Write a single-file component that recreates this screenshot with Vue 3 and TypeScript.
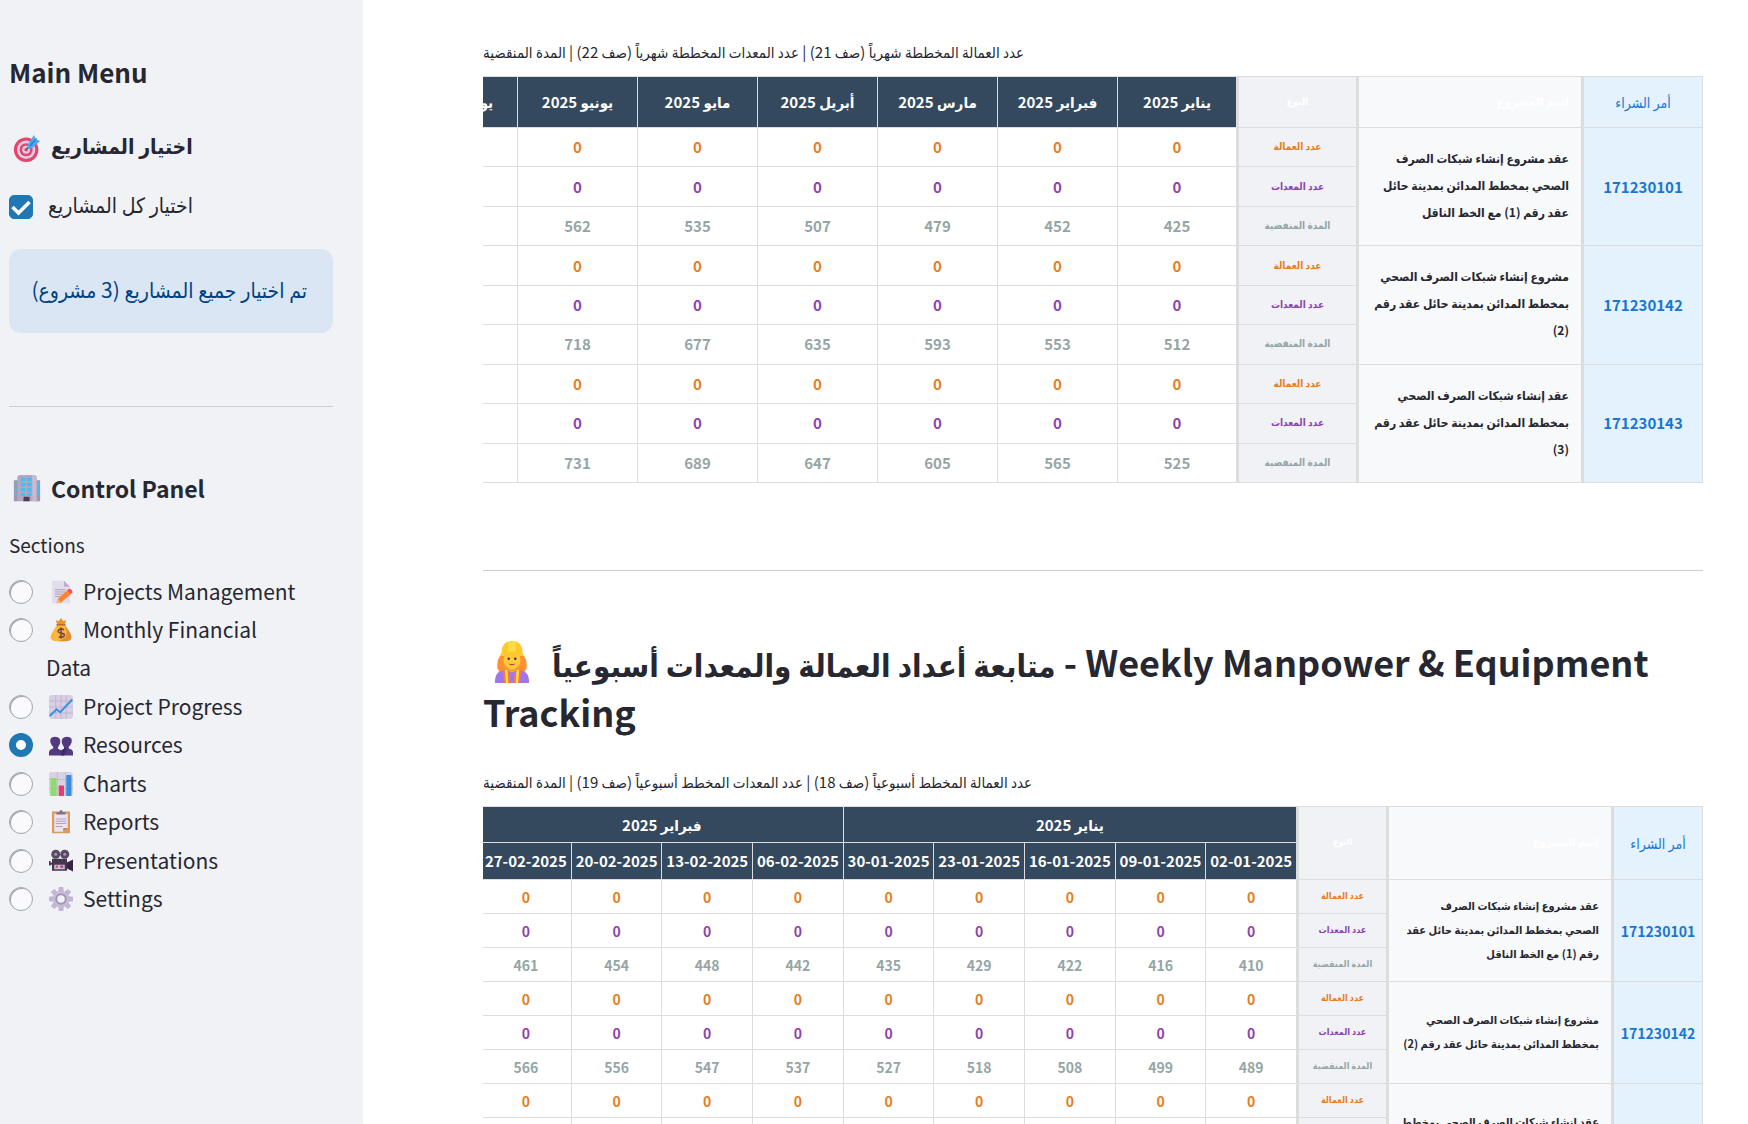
<script setup lang="ts">
import { ref } from 'vue'

interface Project {
  po: string
  lines: string[]
  elapsed: string[]
}

const icons: Record<string, string> = {
  target:
    '<circle cx="15" cy="18" r="14" fill="#e8436a"/><circle cx="15" cy="18" r="10.5" fill="#dcd0e6"/><circle cx="15" cy="18" r="7.5" fill="#e8436a"/><circle cx="15" cy="18" r="4.5" fill="#d8cbe3"/><circle cx="15" cy="18" r="2" fill="#e8436a"/><path d="M15 18 24 8" stroke="#6c6282" stroke-width="2"/><path d="m17 12 7-11 2 5 5 2-9 8-5 1z" fill="#4aa8f0"/><path d="m19 14 8-9" stroke="#2b7fd6" stroke-width="1.5"/>',
  building:
    '<path d="M1 7h5v24H1zM26 7h5v24h-5z" fill="#a196ad"/><path d="M5 4q0-3 3-3h16q3 0 3 3v27H5z" fill="#b3a8bf"/><path d="M22 1h2q3 0 3 3v27h-5z" fill="#c6bbd3"/><path d="M9 4h5v4H9zm7 0h5v4h-5zM9 10h5v4H9zm7 0h5v4h-5zM9 16h5v4H9zm7 0h5v4h-5zM9 22h5v3H9zm7 0h5v3h-5zM2 10h2v4H2zm0 6h2v4H2zm0 6h2v3H2zM28 10h2v4h-2zm0 6h2v4h-2zm0 6h2v3h-2z" fill="#45bdf5"/><path d="M12 31v-4q0-1 1-1h5q1 0 1 1v4z" fill="#4b3d5c"/>',
  memo:
    '<path d="M4 1h16l8 8v22H4z" fill="#e3dcec"/><path d="M20 1v8h8z" fill="#bdb0cc"/><path d="M8 13h14M8 16h14M8 19h11M8 22h9" stroke="#a79bb2" stroke-width="1.2"/><path d="m24 14 5 5-13 11-6 1 2-6z" fill="#ff822d"/><path d="m24 14 2-2q2-1 4 1t1 4l-2 2z" fill="#fa4f5e"/><path d="m12 25 4 5-6 1z" fill="#ffb578"/>',
  money:
    '<path d="M11 9 9 3l4 1 3-4 3 4 4-1-2 6z" fill="#e8952e"/><path d="M11 9h10l6 9q8 13-6 13H11q-14 0-6-13z" fill="#f9b83a"/><path d="M21 9 27 18q8 13-6 13h-9q13-3 11-14z" fill="#e58e32"/><path d="M10 9h12" stroke="#b56a2e" stroke-width="2"/><path d="M20 16q-4-3-7 0t3 4 4 4-7 1M16 12.500v15" fill="none" stroke="#77443f" stroke-width="2"/>',
  trend:
    '<rect x="0" y="0" width="32" height="32" rx="4" fill="#d8cee5"/><path d="M0 8h32M0 24h32M9 0v32M23 0v32M0 16h32M16 0v32" stroke="#b9b0c6" stroke-width="1"/><path d="m1 28 9-9 5 4L31 6" fill="none" stroke="#3291e5" stroke-width="2.500"/>',
  people:
    '<path d="M0 30v-4q0-4 5-5l1-2Q3 16 2 13q-2-8 6-8 8 0 7 8-1 3-3 6v2l4 2 4-2v-2q-2-3-3-6-1-8 7-8t6 8q-1 3-4 6l1 2q5 1 5 5v4z" fill="#533a80"/><path d="M16 30v-4q0-3 4-5v-2l4 2-4 9z" fill="#3f2b68"/>',
  bars:
    '<rect x="0" y="0" width="32" height="32" rx="4" fill="#dad1e5"/><path d="M0 10h32M0 22h32M11 0v32M22 0v32" stroke="#b9b0c6"/><rect x="2" y="8" width="8" height="24" rx="1" fill="#8bdc69"/><rect x="13" y="18" width="7" height="14" rx="1" fill="#e93b73"/><rect x="23" y="4" width="7" height="28" rx="1" fill="#368fe2"/>',
  clipboard:
    '<path d="M4 2h24v29H4z" fill="#dd9a5d"/><path d="M7 5h18v19l-6 5H7z" fill="#eae3f2"/><path d="M25 24h-6v5z" fill="#c18356"/><path d="M10 6V3h4q0-3 2-3t2 3h4v3z" fill="#7d7289"/><path d="M9 12h14M9 15h14M9 18h14M9 22h9" stroke="#a99bb8" stroke-width="1.200"/>',
  camera:
    '<circle cx="9" cy="7" r="6" fill="#594863"/><circle cx="21" cy="7" r="6" fill="#594863"/><circle cx="9" cy="7" r="2" fill="#a49ab0"/><circle cx="21" cy="7" r="2" fill="#a49ab0"/><path d="M4 13h20v16H4zM0 16h2v6H0zM2 18h3v3H2z" fill="#463750"/><path d="m24 18 8-4v16l-8-4z" fill="#392448"/><rect x="7" y="21" width="14" height="6" fill="#cdc1d8"/><path d="M9 22h3v3H9z" fill="#ee376d"/><path d="M15 22h4v3h-4z" fill="#a83c82"/>',
  gear:
    '<g fill="#c3b6d4"><path d="m13 0h6l1 8h-8zM13 32h6l1-8h-8zM0 13v6l8 1v-8zM32 13v6l-8 1v-8z"/><path d="m13 0h6l1 8h-8zM13 32h6l1-8h-8zM0 13v6l8 1v-8zM32 13v6l-8 1v-8z" transform="rotate(45 16 16)"/></g><circle cx="16" cy="16" r="10.500" fill="#c6bad6"/><circle cx="16" cy="16" r="7.500" fill="#9f95ad"/><circle cx="16" cy="16" r="5" fill="#f0f2f6"/>',
  worker:
    '<path d="M7 11q-3 4-2 10 1 3 5 3h12q4 0 5-3 1-6-2-10z" fill="#ff922e"/><path d="M3 32v-2q0-7 7-8h12q7 1 7 8v2z" fill="#a076e8"/><path d="M13 18h6v4q-3 4-6 0z" fill="#f5a827"/><ellipse cx="16" cy="14.500" rx="6.500" ry="7" fill="#ffca3a"/><path d="m9 22 4-1 2 11h-5zM23 22l-4-1-2 11h5z" fill="#ff7a3d"/><path d="m10.500 22 1 10h1.500l-.5-10.500zM21.500 22l-1 10h-1.500l.5-10.500z" fill="#ffdf4a"/><path d="M8 9Q8 0 16 0t8 9l1 2.500q-9-2-18 0z" fill="#ffc928"/><path d="M13 1q3-1 6 0v7h-6z" fill="#ffdc45"/><circle cx="13.500" cy="13.500" r="1" fill="#4a3540"/><circle cx="18.500" cy="13.500" r="1" fill="#4a3540"/><path d="M14 17.500q2 1 4 0" fill="none" stroke="#c13a51" stroke-width="1"/>',
}

const selectAll = ref(true)
const section = ref('Resources')
const sections = [
  { name: 'Projects Management', icon: 'memo' },
  { name: 'Monthly Financial Data', icon: 'money' },
  { name: 'Project Progress', icon: 'trend' },
  { name: 'Resources', icon: 'people' },
  { name: 'Charts', icon: 'bars' },
  { name: 'Reports', icon: 'clipboard' },
  { name: 'Presentations', icon: 'camera' },
  { name: 'Settings', icon: 'gear' },
]

const months = ['يناير 2025', 'فبراير 2025', 'مارس 2025', 'أبريل 2025', 'مايو 2025', 'يونيو 2025', 'يوليو 2025']
const monthly: Project[] = [
  {
    po: '171230101',
    lines: ['عقد مشروع إنشاء شبكات الصرف', 'الصحي بمخطط المدائن بمدينة حائل', 'عقد رقم (1) مع الخط الناقل'],
    elapsed: ['425', '452', '479', '507', '535', '562'],
  },
  {
    po: '171230142',
    lines: ['مشروع إنشاء شبكات الصرف الصحي', 'بمخطط المدائن بمدينة حائل عقد رقم', '(2)'],
    elapsed: ['512', '553', '593', '635', '677', '718'],
  },
  {
    po: '171230143',
    lines: ['عقد إنشاء شبكات الصرف الصحي', 'بمخطط المدائن بمدينة حائل عقد رقم', '(3)'],
    elapsed: ['525', '565', '605', '647', '689', '731'],
  },
]

const weeks = ['02-01-2025', '09-01-2025', '16-01-2025', '23-01-2025', '30-01-2025', '06-02-2025', '13-02-2025', '20-02-2025', '27-02-2025']
const weekly: Project[] = [
  {
    po: '171230101',
    lines: ['عقد مشروع إنشاء شبكات الصرف', 'الصحي بمخطط المدائن بمدينة حائل عقد', 'رقم (1) مع الخط الناقل'],
    elapsed: ['410', '416', '422', '429', '435', '442', '448', '454', '461'],
  },
  {
    po: '171230142',
    lines: ['مشروع إنشاء شبكات الصرف الصحي', 'بمخطط المدائن بمدينة حائل عقد رقم (2)'],
    elapsed: ['489', '499', '508', '518', '527', '537', '547', '556', '566'],
  },
  {
    po: '171230143',
    lines: ['عقد إنشاء شبكات الصرف الصحي بمخطط', 'المدائن بمدينة حائل عقد رقم (3)'],
    elapsed: [],
  },
]

const measures = [
  { key: 'manpower', label: 'عدد العمالة' },
  { key: 'equipment', label: 'عدد المعدات' },
  { key: 'elapsed', label: 'المدة المنقضية' },
]

function cell(project: Project, key: string, i: number, count: number): string {
  if (i >= count) return ''
  return key === 'elapsed' ? (project.elapsed[i] ?? '') : '0'
}
</script>

<template>
  <div class="app">
    <aside class="sidebar">
      <h2 class="menu-title">Main Menu</h2>
      <h3 class="side-title">
        <svg class="emoji" viewBox="0 0 32 32" aria-hidden="true" v-html="icons.target"></svg>
        <span class="lift" dir="rtl">اختيار المشاريع</span>
      </h3>
      <label class="check">
        <input v-model="selectAll" type="checkbox" />
        <span class="lift" dir="rtl">اختيار كل المشاريع</span>
      </label>
      <div class="info" dir="rtl">تم اختيار جميع المشاريع (3 مشروع)</div>
      <hr class="side-rule" />
      <h3 class="side-title">
        <svg class="emoji" viewBox="0 0 32 32" aria-hidden="true" v-html="icons.building"></svg>
        <span>Control Panel</span>
      </h3>
      <fieldset class="sections">
        <legend>Sections</legend>
        <div class="options">
          <label v-for="s in sections" :key="s.name" class="option">
            <input v-model="section" type="radio" name="section" :value="s.name" />
            <span class="option-text"><svg class="emoji-sm" viewBox="0 0 32 32" aria-hidden="true" v-html="icons[s.icon]"></svg>{{ s.name }}</span>
          </label>
        </div>
      </fieldset>
    </aside>

    <main class="content">
      <p class="caption"><bdi dir="rtl">عدد العمالة المخططة شهرياً (صف 21) | عدد المعدات المخططة شهرياً (صف 22) | المدة المنقضية</bdi></p>
      <div class="scroller" dir="rtl">
        <table class="grid monthly">
          <colgroup>
            <col class="c-po" />
            <col class="c-name" />
            <col class="c-kind" />
            <col v-for="(m, i) in months" :key="m" :class="i === 0 ? 'c-first' : 'c-val'" />
          </colgroup>
          <thead>
            <tr>
              <th class="po head" scope="col">أمر الشراء</th>
              <th class="name head" scope="col">اسم المشروع</th>
              <th class="kind head" scope="col">النوع</th>
              <th v-for="m in months" :key="m" class="period" scope="col">{{ m }}</th>
            </tr>
          </thead>
          <tbody v-for="p in monthly" :key="p.po">
            <tr v-for="(m, r) in measures" :key="m.key" :class="m.key">
              <td v-if="r === 0" class="po" rowspan="3">{{ p.po }}</td>
              <td v-if="r === 0" class="name" rowspan="3"><div v-for="l in p.lines" :key="l">{{ l }}</div></td>
              <td class="kind">{{ m.label }}</td>
              <td v-for="(mo, i) in months" :key="mo" class="val">{{ cell(p, m.key, i, 6) }}</td>
            </tr>
          </tbody>
        </table>
      </div>

      <hr class="rule" />

      <h2 class="title"><svg class="worker" viewBox="0 0 32 32" aria-hidden="true" v-html="icons.worker"></svg><bdi class="title-ar" dir="rtl">متابعة أعداد العمالة والمعدات أسبوعياً</bdi> - Weekly Manpower &amp; Equipment Tracking</h2>
      <p class="caption"><bdi dir="rtl">عدد العمالة المخطط أسبوعياً (صف 18) | عدد المعدات المخطط أسبوعياً (صف 19) | المدة المنقضية</bdi></p>
      <div class="scroller" dir="rtl">
        <table class="grid weekly">
          <colgroup>
            <col class="c-po" />
            <col class="c-name" />
            <col class="c-kind" />
            <col v-for="w in weeks" :key="w" class="c-val" />
          </colgroup>
          <thead>
            <tr>
              <th class="po head" rowspan="2" scope="col">أمر الشراء</th>
              <th class="name head" rowspan="2" scope="col">اسم المشروع</th>
              <th class="kind head" rowspan="2" scope="col">النوع</th>
              <th class="period" colspan="5" scope="colgroup">يناير 2025</th>
              <th class="period" colspan="4" scope="colgroup">فبراير 2025</th>
            </tr>
            <tr class="dates">
              <th v-for="w in weeks" :key="w" class="period" scope="col"><bdi dir="ltr">{{ w }}</bdi></th>
            </tr>
          </thead>
          <tbody v-for="p in weekly" :key="p.po">
            <tr v-for="(m, r) in measures" :key="m.key" :class="m.key">
              <td v-if="r === 0" class="po" rowspan="3">{{ p.po }}</td>
              <td v-if="r === 0" class="name" rowspan="3"><div v-for="l in p.lines" :key="l">{{ l }}</div></td>
              <td class="kind">{{ m.label }}</td>
              <td v-for="(w, i) in weeks" :key="w" class="val">{{ cell(p, m.key, i, 9) }}</td>
            </tr>
          </tbody>
        </table>
      </div>
    </main>
  </div>
</template>

<style>
body {
  margin: 0;
  background: #fff;
}
</style>

<style scoped>
.app {
  display: flex;
  height: 100vh;
  overflow: hidden;
  color: #262730;
  font-family: 'Noto Sans CJK SC', 'DejaVu Sans Condensed', 'DejaVu Sans', sans-serif;
}
h2, h3, p {
  margin: 0;
}
.sidebar {
  box-sizing: border-box;
  flex: 0 0 363px;
  min-width: 0;
  padding: 54px 30px 0 9px;
  background: #f0f2f6;
}
.menu-title {
  font-size: 26px;
  line-height: 36px;
  font-weight: 600;
}
.side-title {
  display: flex;
  align-items: center;
  gap: 10px;
  height: 36px;
  margin-top: 40px;
  padding-left: 4px;
  font-size: 23px;
  line-height: 36px;
  font-weight: 600;
}
.side-title .lift {
  font-size: 21px;
}
.emoji {
  width: 28px;
  height: 28px;
}
.lift {
  padding-bottom: 6px;
}
.check {
  display: flex;
  align-items: center;
  gap: 15px;
  height: 36px;
  margin-top: 23px;
  font-size: 21px;
  line-height: 36px;
}
.check input, .option input {
  box-sizing: border-box;
  flex: none;
  appearance: none;
  width: 24px;
  height: 24px;
  margin: 0;
  border: 1px solid #a3a5ae;
  background: #fafafc;
}
.check input {
  border-radius: 5px;
}
.check input:checked {
  border-color: #1f77b4;
  background: #1f77b4 url("data:image/svg+xml,%3Csvg xmlns='http://www.w3.org/2000/svg' viewBox='0 0 24 24'%3E%3Cpath d='m3.500 12 6 6 11-11' fill='none' stroke='white' stroke-width='3.500'/%3E%3C/svg%3E") center / 24px no-repeat;
}
.info {
  margin-top: 24px;
  padding: 22px 26px 26px 20px;
  border-radius: 12px;
  background: #dae6f4;
  color: #004280;
  font-size: 21px;
  line-height: 36px;
  text-align: right;
  white-space: nowrap;
}
.side-rule, .rule {
  height: 1px;
  margin: 73px 0 0;
  border: 0;
  background: #ccced3;
}
.side-rule + .side-title {
  margin-top: 63px;
}
.sections {
  margin: 23px 0 0;
  padding: 0;
  border: 0;
  min-width: 0;
}
.sections legend {
  padding: 0;
  font-size: 19px;
  line-height: 32px;
}
.options {
  display: flex;
  flex-direction: column;
  justify-content: space-between;
  min-height: 345px;
  margin-top: 11px;
}
.option {
  display: flex;
  align-items: flex-start;
  gap: 13px;
  padding-right: 30px;
  font-size: 21px;
  line-height: 38px;
}
.option input {
  margin-top: 8px;
  border-radius: 50%;
  box-shadow: inset 1px 1px 0 #a3a5ae;
}
.option input:checked {
  border: 7px solid #1f77b4;
  background: #fff;
  box-shadow: none;
}
.emoji-sm {
  width: 24px;
  height: 24px;
  margin: 0 10px 0 3px;
  vertical-align: -4px;
}
.content {
  flex: 1;
  min-width: 0;
  padding: 40px 45px 0 120px;
}
.caption {
  font-size: 15px;
  line-height: 24px;
  white-space: nowrap;
}
.scroller {
  margin-top: 12px;
  overflow: hidden;
}
.grid {
  border-collapse: separate;
  border-spacing: 0;
  table-layout: fixed;
  border-top: 1px solid #ddd;
  text-align: center;
  font-weight: 700;
}
.monthly {
  width: 1306px;
  height: 407px;
  font-size: 15px;
}
.monthly .c-po { width: 122px; }
.monthly .c-kind { width: 120px; }
.monthly .c-first { width: 119px; }
.monthly .c-val { width: 120px; }
.c-name { width: 225px; }
.monthly thead tr { height: 51px; }
.monthly tbody tr { height: 39px; }
.weekly {
  width: 1223px;
  font-size: 14px;
}
.weekly .c-po { width: 92px; }
.weekly .c-kind { width: 90px; }
.weekly thead tr { height: 36px; }
.weekly thead .dates { height: 37px; }
.weekly tbody tr { height: 34px; }
th, td {
  padding: 0;
  border-left: 1px solid #ddd;
  border-bottom: 1px solid #ddd;
  line-height: 24px;
  white-space: nowrap;
  background: #fff;
}
.period {
  background: #34495e;
  color: #fff;
  font-size: 15px;
}
.po, .name, .kind {
  border-left-width: 3px;
}
.po {
  border-right: 1px solid #ddd;
  background: #e3f2fd;
  color: #1976d2;
}
.name {
  padding: 0 12px 4px 0;
  background: #f8f9fb;
  text-align: right;
  font-size: 11px;
}
.monthly .name {
  font-size: 12px;
  line-height: 27px;
}
.kind {
  background: #f0f2f6;
  padding-bottom: 2px;
  font-size: 9px;
}
.monthly .kind {
  font-size: 10px;
}
.po.head {
  font-size: 14px;
  font-weight: 400;
}
.name.head, .kind.head {
  color: #fff;
}
.manpower .kind, .manpower .val { color: #e67e22; }
.equipment .kind, .equipment .val { color: #8e44ad; }
.elapsed .kind, .elapsed .val { color: #95a5a6; }
.rule {
  margin-top: 87px;
}
.title {
  margin: 65px 0 34px;
  font-size: 36px;
  line-height: 50px;
  font-weight: 600;
}
.title-ar {
  font-size: 31px;
  line-height: 1;
}
.worker {
  width: 42px;
  height: 42px;
  margin: 0 19px 0 8px;
  vertical-align: -6px;
}
</style>
